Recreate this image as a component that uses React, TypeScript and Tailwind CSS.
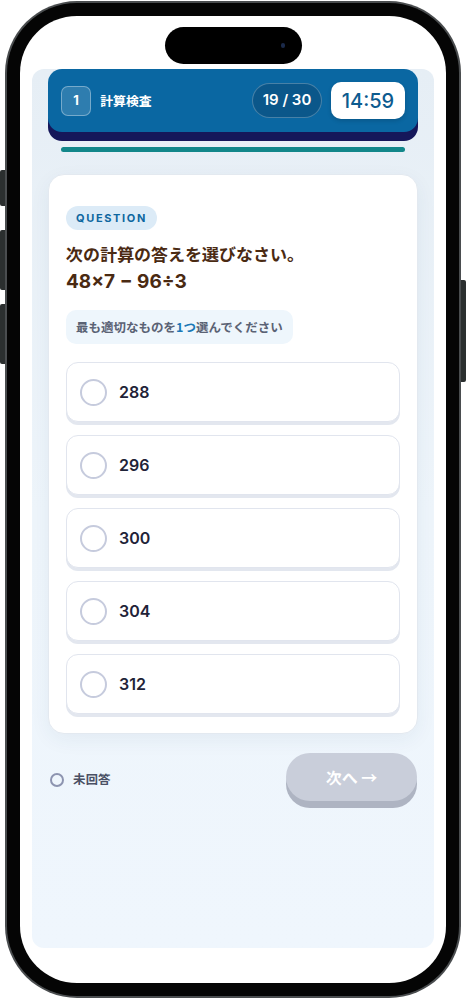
import React from "react";

const options = ["288", "296", "300", "304", "312"];

const jp = { fontFamily: '"Noto Sans JP", "Noto Sans CJK JP", "Noto Sans", sans-serif' };
const num = { fontFamily: 'Inter, "Noto Sans CJK JP", sans-serif' };

export default function App() {
  return (
    <div className="relative w-[466px] h-[1000px] bg-white overflow-hidden" style={jp}>
      {/* side buttons */}
      <div className="absolute left-0 top-[170px] w-[6px] h-[36px] rounded-l-[2px] bg-[#2b2f2f]" />
      <div className="absolute left-0 top-[230px] w-[6px] h-[60px] rounded-l-[2px] bg-[#2b2f2f]" />
      <div className="absolute left-0 top-[304px] w-[6px] h-[60px] rounded-l-[2px] bg-[#2b2f2f]" />
      <div className="absolute right-0 top-[280px] w-[6px] h-[102px] rounded-r-[2px] bg-[#2b2f2f]" />

      {/* phone frame */}
      <div className="relative ml-[5px] mt-[1px] w-[456px] h-[997px] rounded-[72px] bg-[#4a4d4f] p-[2px]">
        <div className="w-full h-full rounded-[70px] bg-[#050505] p-[13px]">
          <div className="relative w-full h-full rounded-[57px] bg-white pt-[53px] px-[12px] pb-[35px]">
            {/* dynamic island */}
            <div className="absolute left-[145px] top-[11px] w-[137px] h-[37px] rounded-full bg-black">
              <div className="absolute left-[116px] top-[16px] w-[4px] h-[5px] rounded-full bg-[#1b2a4a]" />
            </div>

            {/* app container */}
            <div className="h-full rounded-[12px] bg-gradient-to-b from-[#e6eef5] via-[#eef5fb] to-[#eff6fd] px-[16px]">
              {/* header */}
              <div className="h-[63px] rounded-[14px] bg-[#0a67a2] shadow-[0_9px_0_#15175a] flex items-center px-[13px]">
                <div className="w-[30px] h-[30px] rounded-[7px] bg-white/15 border border-white/35 flex items-center justify-center text-white text-[13px] font-bold" style={num}>
                  1
                </div>
                <span className="ml-[9px] text-white text-[13px] font-bold">計算検査</span>
                <div className="ml-auto w-[70px] h-[35px] rounded-full bg-[#0b578a] border border-white/25 flex items-center justify-center text-white text-[15px] font-semibold" style={num}>
                  19 / 30
                </div>
                <div className="ml-[9px] w-[74px] h-[37px] rounded-[10px] bg-white shadow-[0_2px_4px_rgba(0,0,0,0.15)] flex items-center justify-center text-[#0d5b8f] text-[20px] font-medium" style={num}>
                  14:59
                </div>
              </div>

              {/* progress */}
              <div className="mx-[13px] mt-[15px] h-[5px] rounded-full bg-[#12878a]" />

              {/* question card */}
              <div className="mt-[22px] rounded-[16px] bg-white border border-[#e3e9f0] shadow-[0_6px_20px_rgba(30,60,100,0.06)] px-[17px] pt-[28px] pb-[19px]">
                <div className="inline-flex items-center h-[24px] px-[10px] rounded-full bg-[#dcebf7] text-[#0e67a0] text-[11px] font-bold tracking-[0.15em]" style={num}>
                  QUESTION
                </div>
                <div className="mt-[10px] text-[#4a2a12] text-[17px] leading-[28px] font-bold">
                  <div>次の計算の答えを選びなさい。</div>
                  <div className="text-[19px]" style={num}>48×7 − 96÷3</div>
                </div>
                <div className="mt-[14px] inline-flex items-center h-[34px] px-[10px] rounded-[10px] bg-[#eef6fc] text-[#5a6274] text-[12.5px] font-bold">
                  最も適切なものを<span className="text-[#1a78b6]">1つ</span>選んでください
                </div>

                <div className="mt-[18px] flex flex-col gap-[13px]">
                  {options.map((o) => (
                    <div
                      key={o}
                      className="h-[60px] rounded-[12px] bg-white border border-[#e1e5ee] shadow-[0_3px_0_#e3e7ef] flex items-center px-[13px]"
                    >
                      <div className="w-[27px] h-[27px] rounded-full border-2 border-[#c6cbdd]" />
                      <span className="ml-[12px] text-[16px] font-semibold text-[#1f2338]" style={num}>
                        {o}
                      </span>
                    </div>
                  ))}
                </div>
              </div>

              {/* footer */}
              <div className="mt-[19px] flex items-start">
                <div className="mt-[17px] ml-[2px] flex items-center">
                  <div className="w-[14px] h-[14px] rounded-full border-[2.5px] border-[#8d94b0]" />
                  <span className="ml-[9px] text-[12.5px] font-bold text-[#4a5064]">未回答</span>
                </div>
                <div className="ml-auto mr-[1px] w-[131px] h-[48px] rounded-full bg-[#c9ceda] shadow-[0_7px_0_#aeb4c2] flex items-center justify-center text-white text-[16px] font-bold">
                  次へ →
                </div>
              </div>
            </div>
          </div>
        </div>
      </div>
    </div>
  );
}
